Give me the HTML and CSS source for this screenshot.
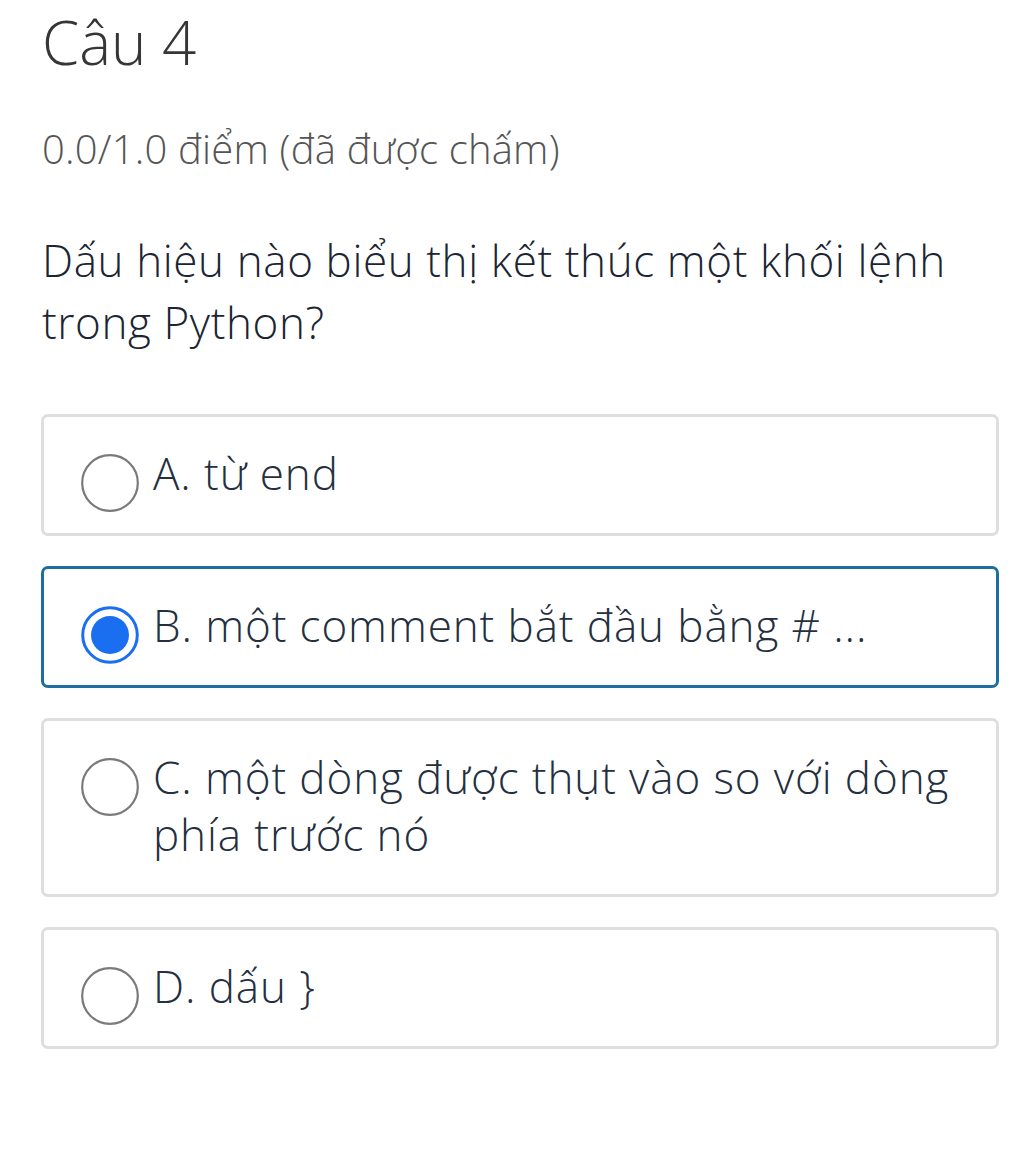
FILE: index.html
```html
<!DOCTYPE html>
<html lang="vi">
<head>
<meta charset="utf-8">
<title>Câu 4</title>
<link rel="stylesheet" href="styles.css">
</head>
<body>
<main class="page">
  <h1 class="title">Câu 4</h1>
  <p class="score">0.0/1.0 điểm (đã được chấm)</p>
  <p class="question">Dấu hiệu nào biểu thị kết thúc một khối lệnh trong Python?</p>
  <ul class="options">
    <li class="option">
      <svg class="radio" viewBox="0 0 58 58" width="58" height="58"><circle cx="29" cy="29" r="27.8" fill="none" stroke="#7a7a7a" stroke-width="2.2"/></svg>
      <span class="label">A. từ end</span>
    </li>
    <li class="option selected">
      <svg class="radio" viewBox="0 0 58 58" width="58" height="58"><circle cx="29" cy="29" r="27.3" fill="none" stroke="#1a6ff0" stroke-width="3"/><circle cx="29" cy="29" r="19" fill="#1a6ff0"/></svg>
      <span class="label">B. một comment bắt đầu bằng # ...</span>
    </li>
    <li class="option">
      <svg class="radio" viewBox="0 0 58 58" width="58" height="58"><circle cx="29" cy="29" r="27.8" fill="none" stroke="#7a7a7a" stroke-width="2.2"/></svg>
      <span class="label">C. một dòng được thụt vào so với dòng phía trước nó</span>
    </li>
    <li class="option">
      <svg class="radio" viewBox="0 0 58 58" width="58" height="58"><circle cx="29" cy="29" r="27.8" fill="none" stroke="#7a7a7a" stroke-width="2.2"/></svg>
      <span class="label">D. dấu }</span>
    </li>
  </ul>
</main>
</body>
</html>
```
FILE: styles.css
```css
html, body {
  margin: 0;
  padding: 0;
  background: #ffffff;
}
body {
  font-family: "Open Sans", "Noto Sans", sans-serif;
  font-weight: 300;
}
.page {
  padding: 6px 25px 0 41px;
}
.title {
  margin: 0;
  font-size: 60px;
  font-weight: 300;
  line-height: 72px;
  color: #363636;
  padding-left: 1px;
}
.score {
  margin: 43px 0 0 0;
  font-size: 40px;
  line-height: 56px;
  letter-spacing: 0.2px;
  color: #555555;
  padding-left: 1px;
}
.question {
  margin: 52px 0 0 0;
  font-size: 44px;
  line-height: 62px;
  letter-spacing: 0.6px;
  color: #1b2533;
  padding-left: 1px;
}
.options {
  list-style: none;
  margin: 61px 0 0 0;
  padding: 0;
  display: flex;
  flex-direction: column;
  gap: 30px;
}
.option {
  display: flex;
  align-items: flex-start;
  gap: 14px;
  border: 3px solid #dedede;
  border-radius: 7px;
  padding: 28px 20px 31px 37px;
}
.option.selected {
  border-color: #1f6c9e;
}
.radio {
  flex: none;
  width: 58px;
  height: 58px;
  margin: 9px 0 -10px 0;
}
.label {
  font-size: 44px;
  line-height: 57px;
  letter-spacing: 0.9px;
  color: #243040;
}
```
